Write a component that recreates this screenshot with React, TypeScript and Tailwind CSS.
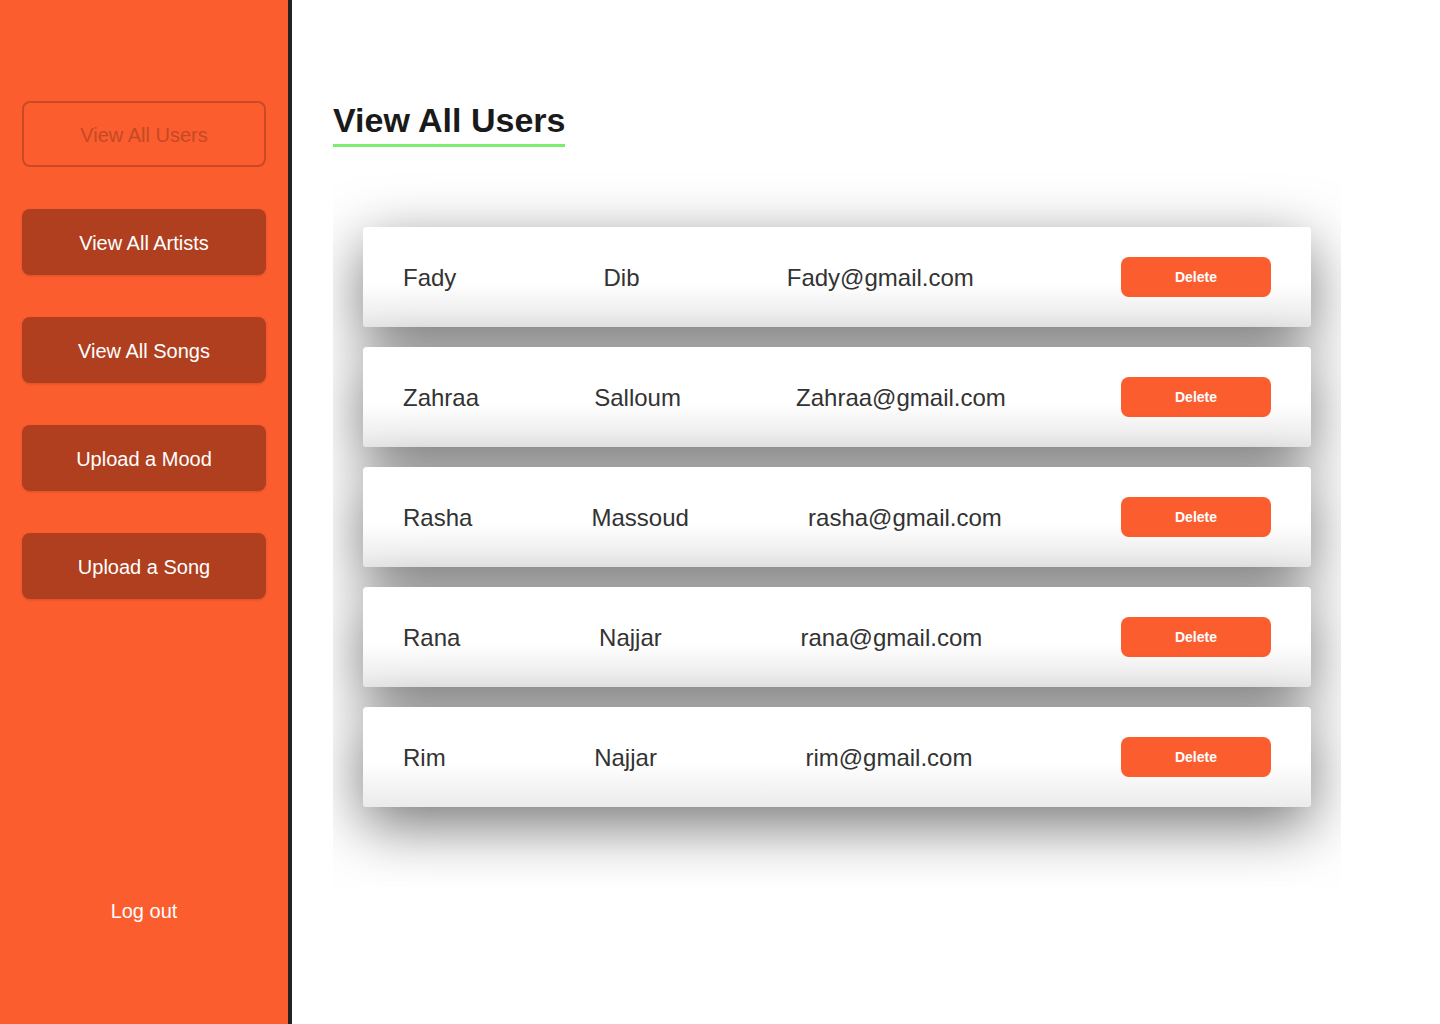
const users = [
  { first: 'Fady', last: 'Dib', email: 'Fady@gmail.com' },
  { first: 'Zahraa', last: 'Salloum', email: 'Zahraa@gmail.com' },
  { first: 'Rasha', last: 'Massoud', email: 'rasha@gmail.com' },
  { first: 'Rana', last: 'Najjar', email: 'rana@gmail.com' },
  { first: 'Rim', last: 'Najjar', email: 'rim@gmail.com' },
]

const navItems = ['View All Artists', 'View All Songs', 'Upload a Mood', 'Upload a Song']

function Sidebar() {
  return (
    <aside className="flex w-[292px] shrink-0 flex-col border-r-[4px] border-[#222222] bg-[#fc5d2f] px-[22px] pt-[101px] pb-[98px]">
      <button
        type="button"
        className="h-[66px] w-full rounded-lg border-2 border-[#c94a24] pt-[2px] text-[20px] text-[#c44a26]"
      >
        View All Users
      </button>
      {navItems.map((item) => (
        <button
          key={item}
          type="button"
          className="mt-[42px] h-[66px] w-full rounded-lg bg-[#af3f1f] pt-[2px] text-[20px] text-white shadow-[0_1px_3px_rgba(0,0,0,0.15)]"
        >
          {item}
        </button>
      ))}
      <button type="button" className="mt-auto text-[20px] text-white">
        Log out
      </button>
    </aside>
  )
}

function UserRow({ first, last, email }: { first: string; last: string; email: string }) {
  return (
    <div className="flex h-[100px] items-center justify-between rounded bg-[linear-gradient(to_bottom,#ffffff_55%,#ebebeb)] px-10 text-[24px] text-[#333333] shadow-[0_18px_60px_rgba(0,0,0,0.55)]">
      <span className="pt-[2px]">{first}</span>
      <span className="pt-[2px]">{last}</span>
      <span className="pt-[2px]">{email}</span>
      <button
        type="button"
        className="h-10 w-[150px] rounded-lg bg-[#fc5d2f] text-[14px] font-bold text-white"
      >
        Delete
      </button>
    </div>
  )
}

export default function App() {
  return (
    <div className="flex min-h-[1024px] bg-white font-['Liberation_Sans',Arial,sans-serif]">
      <Sidebar />
      <main className="flex-1 pl-[41px] pt-[100px]">
        <h1 className="inline-block border-b-[3px] border-[#7ced6f] pb-[4px] text-[34px] leading-[40px] font-bold text-[#1a1a1a]">
          View All Users
        </h1>
        <div className="w-[1008px] overflow-hidden px-[30px] py-[80px]">
          <div className="flex flex-col gap-5">
            {users.map((u) => (
              <UserRow key={u.email} {...u} />
            ))}
          </div>
        </div>
      </main>
    </div>
  )
}
